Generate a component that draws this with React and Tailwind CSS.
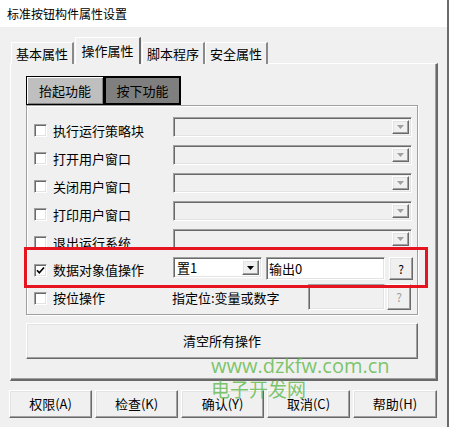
import React from 'react'

const sunken =
  'border border-t-[#a0a0a0] border-l-[#a0a0a0] border-b-white border-r-white shadow-[inset_1px_1px_0_#696969,inset_-1px_-1px_0_#e3e3e3]'
const raised =
  'border border-t-white border-l-white border-b-[#696969] border-r-[#696969] shadow-[inset_-1px_-1px_0_#a0a0a0,inset_1px_1px_0_#e3e3e3]'

const ROWS = [
  { label: '执行运行策略块' },
  { label: '打开用户窗口' },
  { label: '关闭用户窗口' },
  { label: '打印用户窗口' },
  { label: '退出运行系统' },
]

function Arrow({ color }) {
  return (
    <svg width="7" height="4" viewBox="0 0 7 4">
      <path d="M0 0 H7 L3.5 4 Z" fill={color} />
    </svg>
  )
}

function CheckBox({ checked }) {
  return (
    <div className={`w-[13px] h-[13px] bg-white flex items-center justify-center ${sunken}`}>
      {checked && (
        <svg width="9" height="9" viewBox="0 0 9 9">
          <path d="M1 4.2 L3.3 6.8 L8 1.5" stroke="#000" strokeWidth="1.7" fill="none" />
        </svg>
      )}
    </div>
  )
}

function Combo({ width, text, enabled, height = 'h-[20px]' }) {
  return (
    <div
      className={`${width} ${height} flex items-stretch p-[2px] ${sunken} ${enabled ? 'bg-white' : 'bg-[#f0f0f0]'}`}
    >
      <div className="flex-1 flex items-center pl-[1px] text-[13px] leading-none">{text}</div>
      <div className={`w-[17px] flex items-center justify-center bg-[#f0f0f0] ${raised}`}>
        <Arrow color={enabled ? '#000' : '#a0a0a0'} />
      </div>
    </div>
  )
}

function Tab({ label, active }) {
  if (active)
    return (
      <div className="w-[66px] h-[27px] mx-[1px] bg-[#f0f0f0] border-t border-l border-white border-r-2 border-r-[#696969] flex items-start justify-center pt-[3px] text-[13px]">
        {label}
      </div>
    )
  return (
    <div className="w-[63px] h-[22px] bg-[#f0f0f0] border-t border-l border-white border-r-2 border-r-[#8a8a8a] flex items-center justify-center text-[13px]">
      {label}
    </div>
  )
}

export default function App() {
  return (
    <div
      className="w-[449px] h-[427px] bg-[#f0f0f0] relative overflow-hidden border-r-2 border-[#6b6b6b] text-black"
      style={{ fontFamily: '"Noto Sans CJK SC", "Noto Sans", sans-serif' }}
    >
      {/* title */}
      <div className="h-[27px] bg-white flex items-center pl-[7px] text-[12px]">标准按钮构件属性设置</div>

      {/* tabs */}
      <div className="flex items-end pl-[11px] mt-[10px] h-[27px] relative z-10 -mb-[1px]">
        <Tab label="基本属性" />
        <Tab label="操作属性" active />
        <Tab label="脚本程序" />
        <Tab label="安全属性" />
      </div>

      {/* panel */}
      <div className="ml-[10px] w-[428px] h-[318px] border-t border-l border-white border-r-2 border-b-2 border-r-[#696969] border-b-[#696969] shadow-[inset_-1px_-1px_0_#a0a0a0] pl-[15px] pt-[12px]">
        <div className="flex h-[29px]">
          <div className="w-[78px] border border-black bg-[#bfbfbf] shadow-[inset_1px_1px_0_white,inset_-1px_-1px_0_#808080] flex items-center justify-center text-[13px]">
            抬起功能
          </div>
          <div className="w-[77px] border-2 border-black bg-[#7f7f7f] flex items-center justify-center text-[13px]">
            按下功能
          </div>
        </div>

        {/* group box */}
        <div className="w-[392px] h-[210px] border border-[#a0a0a0] shadow-[1px_1px_0_white,inset_1px_1px_0_white] pt-[10px]">
          {ROWS.map((r) => (
            <div key={r.label} className="flex h-[28px]">
              <div className="w-[146px] flex items-center pl-[7px] gap-[6px] text-[13px] pt-[1px]">
                <CheckBox />
                <span>{r.label}</span>
              </div>
              <div className="pt-[1px]">
                <Combo width="w-[239px]" />
              </div>
            </div>
          ))}
          <div className="flex h-[28px]">
            <div className="w-[146px] flex items-center pl-[7px] gap-[6px] text-[13px]">
              <CheckBox checked />
              <span>数据对象值操作</span>
            </div>
            <div className="flex gap-[4px] pt-[1px]">
              <Combo width="w-[89px]" height="h-[21px]" text="置1" enabled />
              <div className={`w-[119px] h-[23px] bg-white ${sunken} flex items-center pl-[2px] text-[13px]`}>输出0</div>
              <div className={`w-[24px] h-[23px] ${raised} flex items-center justify-center text-[12px]`}>?</div>
            </div>
          </div>
          <div className="flex h-[28px]">
            <div className="w-[145px] flex items-center pl-[7px] gap-[6px] text-[13px]">
              <CheckBox />
              <span>按位操作</span>
            </div>
            <div className="flex items-center text-[13px] w-[136px]">指定位:变量或数字</div>
            <div className="flex gap-[2px]">
              <div className={`w-[77px] h-[26px] bg-[#f0f0f0] ${sunken}`} />
              <div className={`w-[24px] h-[26px] ${raised} flex items-center justify-center text-[12px] text-[#a0a0a0]`}>?</div>
            </div>
          </div>
        </div>

        <div className={`mt-[8px] w-[392px] h-[36px] ${raised} flex items-center justify-center text-[13px]`}>
          清空所有操作
        </div>
      </div>

      {/* bottom buttons */}
      <div className="flex gap-[3px] pl-[9px] mt-[9px]">
        {['权限(A)', '检查(K)', '确认(Y)', '取消(C)', '帮助(H)'].map((b, i) => (
          <div
            key={b}
            className={`${i === 4 ? 'w-[84px]' : 'w-[83px]'} h-[28px] ${raised} flex items-center justify-center text-[13px]`}
          >
            {b}
          </div>
        ))}
      </div>

      {/* annotation */}
      <div className="absolute left-[24px] top-[247px] w-[404px] h-[41px] border-[3px] border-[#e6141e] pointer-events-none" />

      {/* watermark */}
      <div className="absolute left-[211px] top-[356px] pointer-events-none text-[#5cb846]/80 leading-none">
        <div className="text-[20px]" style={{ fontFamily: '"Open Sans", sans-serif' }}>www.dzkfw.com.cn</div>
        <div className="text-[19px] mt-[3px]">电子开发网</div>
      </div>
    </div>
  )
}
